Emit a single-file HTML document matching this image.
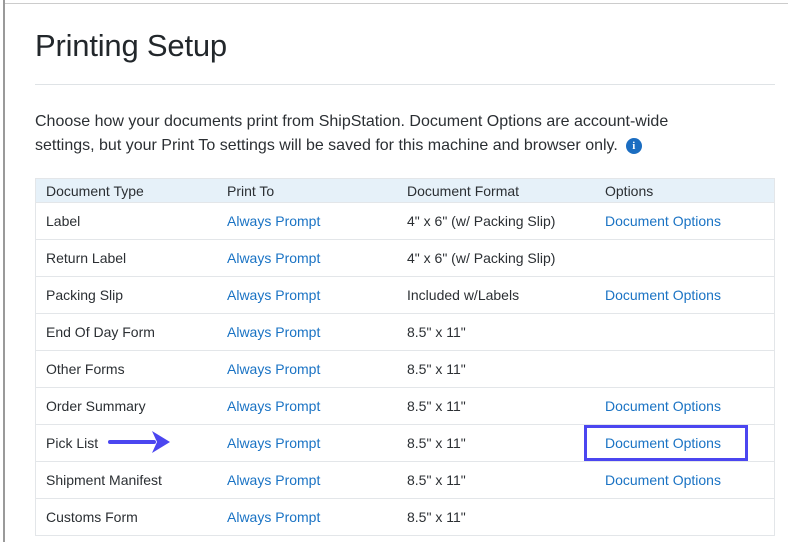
<!DOCTYPE html>
<html><head><style>
body{margin:0;width:788px;height:542px;overflow:hidden;background:#fff;font-family:"Liberation Sans",sans-serif;color:#2b2f33;position:relative}
.vl{position:absolute;left:3px;top:0;width:2px;height:542px;background:#9a9a9a}
.tl{position:absolute;left:5px;top:3px;width:783px;height:1px;background:#ccc}
h1{position:absolute;left:35px;top:28px;margin:0;font-weight:normal;font-size:31px;color:#22272b;letter-spacing:-0.2px}
.hr{position:absolute;left:35px;top:84px;width:740px;height:1px;background:#dfe3e6}
p{position:absolute;left:35px;top:110px;margin:0;font-size:16px;line-height:24px;width:650px;color:#2b2f33}
.info{display:inline-block;width:16px;height:16px;border-radius:50%;background:#1b6dc1;color:#fff;font-size:11px;font-weight:bold;text-align:center;line-height:16px;vertical-align:1px;margin-left:8px;font-family:"Liberation Serif",serif}
table{position:absolute;left:35px;top:178px;width:740px;border-collapse:collapse;font-size:14px;border:1px solid #e3e6e9;table-layout:fixed}
th{background:#e6f1f9;font-weight:normal;text-align:left;height:23px;padding:0 0 0 10px;color:#2b2f33}
td{height:37px;border-top:1px solid #e3e6e9;padding:0 0 0 10px;vertical-align:middle;box-sizing:border-box}
th:nth-child(1){width:171px}th:nth-child(2){width:170px}th:nth-child(3){width:188px}
a{color:#1a73c4;text-decoration:none}
.box{position:absolute;left:584px;top:425px;width:158px;height:30px;border:3px solid #4b46f0}
</style></head><body>
<div class="vl"></div><div class="tl"></div>
<h1>Printing Setup</h1>
<div class="hr"></div>
<p>Choose how your documents print from ShipStation. Document Options are account-wide settings, but your Print To settings will be saved for this machine and browser only.<span class="info">i</span></p>
<table>
<tr><th>Document Type</th><th>Print To</th><th>Document Format</th><th>Options</th></tr>
<tr><td>Label</td><td><a>Always Prompt</a></td><td>4" x 6" (w/ Packing Slip)</td><td><a>Document Options</a></td></tr>
<tr><td>Return Label</td><td><a>Always Prompt</a></td><td>4" x 6" (w/ Packing Slip)</td><td></td></tr>
<tr><td>Packing Slip</td><td><a>Always Prompt</a></td><td>Included w/Labels</td><td><a>Document Options</a></td></tr>
<tr><td>End Of Day Form</td><td><a>Always Prompt</a></td><td>8.5" x 11"</td><td></td></tr>
<tr><td>Other Forms</td><td><a>Always Prompt</a></td><td>8.5" x 11"</td><td></td></tr>
<tr><td>Order Summary</td><td><a>Always Prompt</a></td><td>8.5" x 11"</td><td><a>Document Options</a></td></tr>
<tr><td>Pick List</td><td><a>Always Prompt</a></td><td>8.5" x 11"</td><td><a>Document Options</a></td></tr>
<tr><td>Shipment Manifest</td><td><a>Always Prompt</a></td><td>8.5" x 11"</td><td><a>Document Options</a></td></tr>
<tr><td>Customs Form</td><td><a>Always Prompt</a></td><td>8.5" x 11"</td><td></td></tr>
</table>
<div class="box"></div>
<svg style="position:absolute;left:108px;top:430px" width="64" height="24"><line x1="2" y1="12" x2="46" y2="12" stroke="#4b46f0" stroke-width="4" stroke-linecap="round"/><path d="M44 1 L62 12 L44 23 L49 12 Z" fill="#4b46f0"/></svg>
</body></html>
